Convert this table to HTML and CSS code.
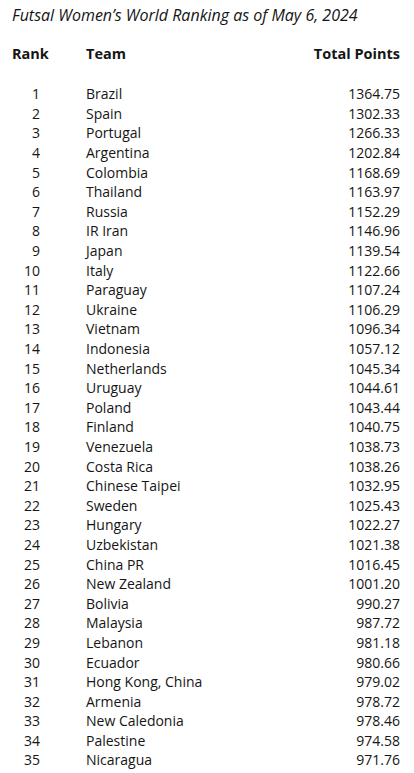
FILE: index.html
```html
<!DOCTYPE html>
<html lang="en">
<head>
<meta charset="utf-8">
<link rel="stylesheet" href="styles.css">
</head>
<body>
<div class="page">
  <h1 class="title">Futsal Women’s World Ranking as of May 6, 2024</h1>
  <div class="row head">
    <div class="rank">Rank</div><div></div><div class="team">Team</div><div class="pts">Total Points</div>
  </div>
  <div class="list">
    <div class="row"><div class="rank">1</div><div></div><div class="team">Brazil</div><div class="pts">1364.75</div></div>
    <div class="row"><div class="rank">2</div><div></div><div class="team">Spain</div><div class="pts">1302.33</div></div>
    <div class="row"><div class="rank">3</div><div></div><div class="team">Portugal</div><div class="pts">1266.33</div></div>
    <div class="row"><div class="rank">4</div><div></div><div class="team">Argentina</div><div class="pts">1202.84</div></div>
    <div class="row"><div class="rank">5</div><div></div><div class="team">Colombia</div><div class="pts">1168.69</div></div>
    <div class="row"><div class="rank">6</div><div></div><div class="team">Thailand</div><div class="pts">1163.97</div></div>
    <div class="row"><div class="rank">7</div><div></div><div class="team">Russia</div><div class="pts">1152.29</div></div>
    <div class="row"><div class="rank">8</div><div></div><div class="team">IR Iran</div><div class="pts">1146.96</div></div>
    <div class="row"><div class="rank">9</div><div></div><div class="team">Japan</div><div class="pts">1139.54</div></div>
    <div class="row"><div class="rank">10</div><div></div><div class="team">Italy</div><div class="pts">1122.66</div></div>
    <div class="row"><div class="rank">11</div><div></div><div class="team">Paraguay</div><div class="pts">1107.24</div></div>
    <div class="row"><div class="rank">12</div><div></div><div class="team">Ukraine</div><div class="pts">1106.29</div></div>
    <div class="row"><div class="rank">13</div><div></div><div class="team">Vietnam</div><div class="pts">1096.34</div></div>
    <div class="row"><div class="rank">14</div><div></div><div class="team">Indonesia</div><div class="pts">1057.12</div></div>
    <div class="row"><div class="rank">15</div><div></div><div class="team">Netherlands</div><div class="pts">1045.34</div></div>
    <div class="row"><div class="rank">16</div><div></div><div class="team">Uruguay</div><div class="pts">1044.61</div></div>
    <div class="row"><div class="rank">17</div><div></div><div class="team">Poland</div><div class="pts">1043.44</div></div>
    <div class="row"><div class="rank">18</div><div></div><div class="team">Finland</div><div class="pts">1040.75</div></div>
    <div class="row"><div class="rank">19</div><div></div><div class="team">Venezuela</div><div class="pts">1038.73</div></div>
    <div class="row"><div class="rank">20</div><div></div><div class="team">Costa Rica</div><div class="pts">1038.26</div></div>
    <div class="row"><div class="rank">21</div><div></div><div class="team">Chinese Taipei</div><div class="pts">1032.95</div></div>
    <div class="row"><div class="rank">22</div><div></div><div class="team">Sweden</div><div class="pts">1025.43</div></div>
    <div class="row"><div class="rank">23</div><div></div><div class="team">Hungary</div><div class="pts">1022.27</div></div>
    <div class="row"><div class="rank">24</div><div></div><div class="team">Uzbekistan</div><div class="pts">1021.38</div></div>
    <div class="row"><div class="rank">25</div><div></div><div class="team">China PR</div><div class="pts">1016.45</div></div>
    <div class="row"><div class="rank">26</div><div></div><div class="team">New Zealand</div><div class="pts">1001.20</div></div>
    <div class="row"><div class="rank">27</div><div></div><div class="team">Bolivia</div><div class="pts">990.27</div></div>
    <div class="row"><div class="rank">28</div><div></div><div class="team">Malaysia</div><div class="pts">987.72</div></div>
    <div class="row"><div class="rank">29</div><div></div><div class="team">Lebanon</div><div class="pts">981.18</div></div>
    <div class="row"><div class="rank">30</div><div></div><div class="team">Ecuador</div><div class="pts">980.66</div></div>
    <div class="row"><div class="rank">31</div><div></div><div class="team">Hong Kong, China</div><div class="pts">979.02</div></div>
    <div class="row"><div class="rank">32</div><div></div><div class="team">Armenia</div><div class="pts">978.72</div></div>
    <div class="row"><div class="rank">33</div><div></div><div class="team">New Caledonia</div><div class="pts">978.46</div></div>
    <div class="row"><div class="rank">34</div><div></div><div class="team">Palestine</div><div class="pts">974.58</div></div>
    <div class="row"><div class="rank">35</div><div></div><div class="team">Nicaragua</div><div class="pts">971.76</div></div>
  </div>
</div>
</body>
</html>
```
FILE: styles.css
```css
html, body {
  margin: 0;
  padding: 0;
  background: #fff;
}
.page {
  font-family: "Open Sans", "Noto Sans", sans-serif;
  color: #151515;
  font-size: 14px;
  line-height: 1.4;
  padding: 0 14px 0 12px;
}
.title {
  margin: 0;
  padding-top: 4px;
  font-size: 16px;
  font-style: italic;
  font-weight: 400;
  line-height: 22px;
}
.row {
  display: grid;
  grid-template-columns: 36px 38px 1fr auto;
}
.head {
  margin-top: 18px;
  font-weight: 700;
  font-size: 14.5px;
}
.head .rank {
  text-align: left;
}
.list {
  margin-top: 20px;
}
.rank {
  text-align: right;
  padding-right: 8px;
}
.pts {
  text-align: right;
}
```
